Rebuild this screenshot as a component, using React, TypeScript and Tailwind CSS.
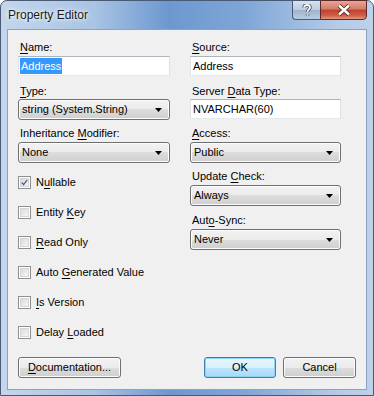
import React from "react";

const font = "font-['Liberation_Sans',Arial,sans-serif]";

// "&Name:" -> Name with the N underlined
function Mnemonic({ text }: { text: string }) {
  const i = text.indexOf("&");
  if (i < 0) return <>{text}</>;
  return (
    <>
      {text.slice(0, i)}
      <span className="underline decoration-1 underline-offset-[2px]">{text[i + 1]}</span>
      {text.slice(i + 2)}
    </>
  );
}

function Label({ text }: { text: string }) {
  return (
    <div className="h-[15px] leading-[15px] pl-[2px] text-[11px] text-black">
      <Mnemonic text={text} />
    </div>
  );
}

function TextBox({ value, selected }: { value: string; selected?: boolean }) {
  return (
    <div className="h-[20px] flex items-center bg-white border border-[#abadb3] border-t-[#aeb4bb] border-b-[#e3e9ef] border-l-[#e2e3ea] border-r-[#dbdfe6] pl-[1px] text-[11px]">
      {selected ? (
        <span className="bg-[#3399ff] text-white px-[1px] leading-[16px]">{value}</span>
      ) : (
        <span className="px-[1px] leading-[16px] text-black">{value}</span>
      )}
    </div>
  );
}

function Combo({ value }: { value: string }) {
  return (
    <div className="h-[21px] rounded-[3px] border border-[#707070] bg-[linear-gradient(#f2f2f2_0%,#ebebeb_50%,#dddddd_50%,#cfcfcf_100%)] shadow-[inset_0_0_0_1px_#fcfcfc] flex items-center justify-between pl-[3px] pr-[7px] text-[11px] text-black">
      <span>{value}</span>
      <svg width="7" height="4" viewBox="0 0 7 4">
        <path d="M0 0h7L3.5 4z" fill="#000" />
      </svg>
    </div>
  );
}

function CheckRow({ text, checked }: { text: string; checked?: boolean }) {
  return (
    <div className="h-[30px] flex items-center gap-[5px] text-[11px] text-black">
      <div className="w-[13px] h-[13px] border border-[#8e8f8f] bg-white p-[1px]">
        <div className="w-full h-full bg-[linear-gradient(135deg,#dadada,#f6f6f6)] border border-[#d5d5d5] flex items-center justify-center">
          {checked && (
            <svg width="9" height="9" viewBox="0 0 9 9">
              <path d="M1 4.5l2.3 2.8L8 1" fill="none" stroke="#4a5f97" strokeWidth="1.6" />
            </svg>
          )}
        </div>
      </div>
      <span>
        <Mnemonic text={text} />
      </span>
    </div>
  );
}

function Button({ text, w, isDefault }: { text: string; w: string; isDefault?: boolean }) {
  return (
    <div
      className={`${w} h-[21px] rounded-[3px] border flex items-center justify-center text-[11px] text-black ${
        isDefault
          ? "border-[#3c7fb1] bg-[linear-gradient(#eaf6fd_0%,#d9f0fc_50%,#bee6fd_50%,#a7d9f5_100%)] shadow-[inset_0_0_0_1px_#8fd1f2]"
          : "border-[#707070] bg-[linear-gradient(#f2f2f2_0%,#ebebeb_50%,#dddddd_50%,#cfcfcf_100%)] shadow-[inset_0_0_0_1px_#fcfcfc]"
      }`}
    >
      <Mnemonic text={text} />
    </div>
  );
}

export default function App() {
  return (
    <div className={`${font} w-[374px] h-[396px] bg-white`}>
      <div className="w-[374px] h-[396px] rounded-t-[7px] border border-[#4a5a74] bg-[linear-gradient(90deg,#c3d6ec_0%,#a9c4e4_25%,#6d98cf_45%,#7ea5d6_65%,#b4cbe7_90%,#bcd1ea_100%)] flex flex-col">
        <div className="h-[28px] flex items-start justify-between pl-[7px] pr-[6px]">
          <div className="pt-[7px] text-[12px] leading-[15px] text-[#1a1a1a] [text-shadow:0_0_6px_#ffffff,0_0_3px_#ffffff]">
            Property Editor
          </div>
          <div className="flex -mt-px">
            <div className="w-[28px] h-[20px] rounded-bl-[4px] border border-[#4a5a74] border-r-0 bg-[linear-gradient(#d9e3ef_0%,#bccbe0_50%,#9fb2cb_50%,#b9cde2_100%)] flex items-center justify-center">
              <svg width="10" height="13" viewBox="0 0 10 13">
                <path
                  d="M2 3.5C2 1.5 3.5 1 5 1s3 .8 3 2.5-2.5 2.2-2.5 4.2M5.5 10.3v1.4"
                  fill="none"
                  stroke="#39465a"
                  strokeWidth="3.4"
                />
                <path
                  d="M2 3.5C2 1.5 3.5 1 5 1s3 .8 3 2.5-2.5 2.2-2.5 4.2M5.5 10.3v1.4"
                  fill="none"
                  stroke="#ffffff"
                  strokeWidth="1.8"
                />
              </svg>
            </div>
            <div className="w-[47px] h-[20px] rounded-br-[4px] border border-[#5b2b2b] bg-[linear-gradient(#e8a495_0%,#d47c6a_45%,#c2402e_50%,#cf5d44_80%,#e19a7e_100%)] flex items-center justify-center">
              <svg width="14" height="12" viewBox="0 0 14 12">
                <path d="M2 1.5l10 9M12 1.5l-10 9" stroke="#4b2621" strokeWidth="4.2" />
                <path d="M2 1.5l10 9M12 1.5l-10 9" stroke="#ffffff" strokeWidth="2.4" />
              </svg>
            </div>
          </div>
        </div>

        <div className="ml-[6px] w-[360px] h-[361px] border border-[#8da2bf] bg-[#f0f0f0] flex flex-col pt-[10px] pl-[10px]">
          <div className="grid grid-cols-[152px_151px] gap-x-[20px] h-[308px]">
            <div className="flex flex-col">
              <Label text="&Name:" />
              <div className="mt-[1px]">
                <TextBox value="Address" selected />
              </div>
              <div className="mt-[8px]">
                <Label text="&Type:" />
              </div>
              <Combo value="string (System.String)" />
              <div className="mt-[6px]">
                <Label text="Inheritance &Modifier:" />
              </div>
              <div className="mt-[1px]">
                <Combo value="None" />
              </div>
              <div className="mt-[4px]">
                <CheckRow text="N&ullable" checked />
                <CheckRow text="Entity &Key" />
                <CheckRow text="&Read Only" />
                <CheckRow text="Auto &Generated Value" />
                <CheckRow text="&Is Version" />
                <CheckRow text="Delay &Loaded" />
              </div>
            </div>
            <div className="flex flex-col">
              <Label text="&Source:" />
              <div className="mt-[1px]">
                <TextBox value="Address" />
              </div>
              <div className="mt-[8px]">
                <Label text="Server &Data Type:" />
              </div>
              <TextBox value="NVARCHAR(60)" />
              <div className="mt-[7px]">
                <Label text="&Access:" />
              </div>
              <div className="mt-[1px]">
                <Combo value="Public" />
              </div>
              <div className="mt-[6px]">
                <Label text="Update &Check:" />
              </div>
              <div className="mt-[1px]">
                <Combo value="Always" />
              </div>
              <div className="mt-[7px]">
                <Label text="Aut&o-Sync:" />
              </div>
              <div className="mt-[1px]">
                <Combo value="Never" />
              </div>
            </div>
          </div>
          <div className="mt-[9px] flex items-center pr-[10px]">
            <Button text="&Documentation..." w="w-[103px]" />
            <div className="flex-1" />
            <Button text="OK" w="w-[72px]" isDefault />
            <div className="w-[7px]" />
            <Button text="Cancel" w="w-[73px]" />
          </div>
        </div>
      </div>
    </div>
  );
}
